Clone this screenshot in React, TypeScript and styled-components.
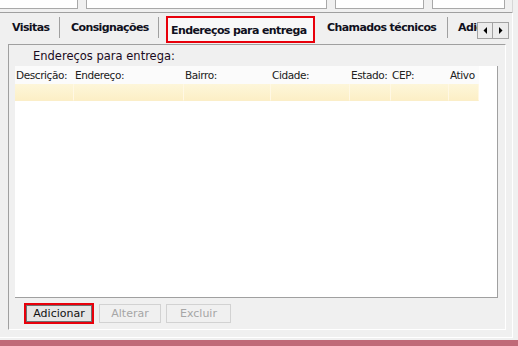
import styled, { createGlobalStyle } from "styled-components";

const GlobalStyle = createGlobalStyle`
  body {
    margin: 0;
    background: #f0f0f0;
    font-family: "DejaVu Sans", Verdana, sans-serif;
    font-size: 11px;
    color: #1c1c1c;
  }
`;

const columns = [
  { label: "Descrição:", w: 59 },
  { label: "Endereço:", w: 110 },
  { label: "Bairro:", w: 87 },
  { label: "Cidade:", w: 79 },
  { label: "Estado:", w: 41 },
  { label: "CEP:", w: 58 },
  { label: "Ativo", w: 30 },
];

export default function App() {
  return (
    <>
      <GlobalStyle />
      <Page>
        <TopBar>
          <Field w={80} />
          <Field w={241} />
          <Field w={89}>
            <FieldText>20/09/2000</FieldText>
          </Field>
          <Field w={73} />
        </TopBar>

        <Frame>
          <TabStrip>
            <Tabs>
              <Tab w={60} pad={12}>Visitas</Tab>
              <Tab w={99} pad={11}>Consignações</Tab>
              <ActiveTab>Endereços para entrega</ActiveTab>
              <Tab w={133} pad={12}>Chamados técnicos</Tab>
              <Tab w={80} pad={10} last>Adicionais</Tab>
            </Tabs>
            <Scroller>
              <ScrollButton>
                <svg width="5" height="7" viewBox="0 0 5 7">
                  <path d="M4 0v7L0.5 3.5z" fill="#000" />
                </svg>
              </ScrollButton>
              <ScrollButton>
                <svg width="5" height="7" viewBox="0 0 5 7">
                  <path d="M1 0v7l3.5-3.5z" fill="#000" />
                </svg>
              </ScrollButton>
            </Scroller>
          </TabStrip>

          <Panel>
            <GroupLabel>Endereços para entrega:</GroupLabel>
            <Grid>
              <HeaderRow>
                {columns.map((c) => (
                  <HeaderCell key={c.label} w={c.w}>
                    {c.label}
                  </HeaderCell>
                ))}
              </HeaderRow>
              <DataRow>
                {columns.map((c) => (
                  <DataCell key={c.label} w={c.w} />
                ))}
              </DataRow>
            </Grid>
            <Buttons>
              <Focused>
                <Button>Adicionar</Button>
              </Focused>
              <Button disabled w={62}>
                Alterar
              </Button>
              <Button disabled w={65}>
                Excluir
              </Button>
            </Buttons>
          </Panel>
        </Frame>
        <StatusBar />
      </Page>
    </>
  );
}

const Page = styled.div`
  width: 518px;
  height: 346px;
  overflow: hidden;
  display: flex;
  flex-direction: column;
`;

const TopBar = styled.div`
  height: 12px;
  display: flex;
  gap: 8px;
  margin-left: -2px;
  width: 515px;
  border-right: 1px solid #d6d6d6;
  box-sizing: border-box;
`;

const Field = styled.div<{ w: number }>`
  width: ${(p) => p.w}px;
  height: 9px;
  box-sizing: border-box;
  background: #fff;
  border: 1px solid #a9a9a9;
  border-top: none;
  overflow: hidden;
`;

const FieldText = styled.div`
  margin-top: -11px;
  padding-left: 4px;
  line-height: 13px;
`;

const Frame = styled.div`
  width: 513px;
  height: 326px;
  box-sizing: border-box;
  border-top: 1px solid #a0a0a0;
  border-right: 1px solid #fff;
  border-bottom: 1px solid #fff;
  display: flex;
  flex-direction: column;
`;

const TabStrip = styled.div`
  height: 31px;
  display: flex;
  align-items: flex-start;
`;

const Tabs = styled.div`
  width: 477px;
  display: flex;
  align-items: flex-start;
  overflow: hidden;
  white-space: nowrap;
`;

const Tab = styled.div<{ w: number; pad: number; last?: boolean }>`
  flex: none;
  width: ${(p) => p.w}px;
  box-sizing: border-box;
  margin-top: 4px;
  height: 21px;
  line-height: 21px;
  padding-left: ${(p) => p.pad}px;
  border-right: ${(p) => (p.last ? "none" : "1px solid #a0a0a0")};
  font-weight: bold;
  letter-spacing: -0.6px;
  color: #101020;
`;

const ActiveTab = styled.div`
  flex: none;
  width: 149px;
  height: 27px;
  margin: 3px 0 0 7px;
  box-sizing: border-box;
  border: 2px solid #e8000b;
  background: #f8f8f8;
  padding: 5px 0 0 3px;
  line-height: 15px;
  font-weight: bold;
  letter-spacing: -0.6px;
  color: #101020;
`;

const Scroller = styled.div`
  display: flex;
  margin-top: 9px;
`;

const ScrollButton = styled.div`
  width: 16px;
  height: 17px;
  box-sizing: border-box;
  border: 1px solid #a3a3a3;
  background: #ececec;
  display: flex;
  align-items: center;
  justify-content: center;
  & + & {
    border-left: none;
  }
`;

const Panel = styled.div`
  margin-left: 8px;
  width: 498px;
  height: 286px;
  box-sizing: border-box;
  border-top: 1px solid #a0a0a0;
  border-left: 1px solid #a0a0a0;
  border-right: 1px solid #fff;
  border-bottom: 1px solid #fff;
  display: flex;
  flex-direction: column;
`;

const GroupLabel = styled.div`
  padding: 5px 0 0 24px;
  line-height: 13px;
  height: 13px;
  font-size: 11.5px;
  color: #1a0a20;
`;

const Grid = styled.div`
  margin: 3px 0 0 6px;
  width: 483px;
  height: 232px;
  box-sizing: border-box;
  background: #fff;
  border-right: 1px solid #a0a0a0;
  border-bottom: 1px solid #a0a0a0;
`;

const HeaderRow = styled.div`
  display: flex;
  height: 18px;
`;

const HeaderCell = styled.div<{ w: number }>`
  width: ${(p) => p.w}px;
  padding-left: 1px;
  box-sizing: border-box;
  background: #fbfbfb;
  line-height: 18px;
  white-space: nowrap;
  font-size: 10.5px;
  letter-spacing: -0.4px;
  color: #202020;
`;

const DataRow = styled.div`
  display: flex;
  height: 17px;
`;

const DataCell = styled.div<{ w: number }>`
  width: ${(p) => p.w}px;
  box-sizing: border-box;
  background: linear-gradient(#fdf6da, #fcefc6);
  border-right: 1px solid #fff8e4;
  border-bottom: 1px solid #fbeec8;
`;

const Buttons = styled.div`
  display: flex;
  align-items: flex-start;
  gap: 5px;
  margin: 5px 0 0 15px;
`;

const Focused = styled.div`
  border: 2px solid #e8000b;
  display: flex;
`;

const Button = styled.button<{ w?: number }>`
  width: ${(p) => (p.w ? `${p.w}px` : "66px")};
  height: ${(p) => (p.disabled ? "19px" : "17px")};
  margin-top: ${(p) => (p.disabled ? "1px" : "0")};
  box-sizing: border-box;
  padding: 0;
  font: inherit;
  line-height: 15px;
  text-align: center;
  background: ${(p) => (p.disabled ? "#f0f0f0" : "#e5e5e5")};
  border: 1px solid ${(p) => (p.disabled ? "#d2d2d2" : "#6f6f6f")};
  color: ${(p) => (p.disabled ? "#a6a6a6" : "#101010")};
`;

const StatusBar = styled.div`
  margin-top: 2px;
  height: 6px;
  background: #c06a78;
`;
